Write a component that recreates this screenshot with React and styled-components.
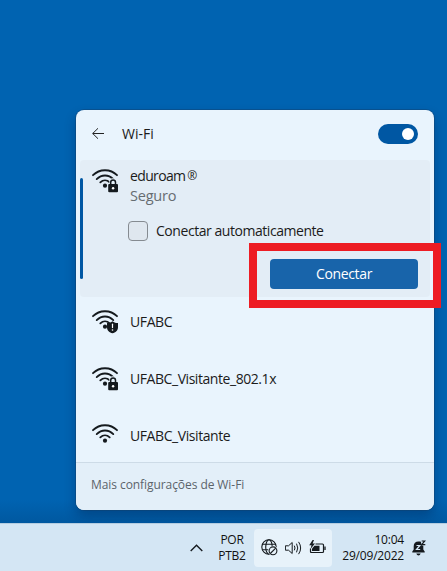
import React from "react";
import styled, { createGlobalStyle } from "styled-components";

const Global = createGlobalStyle`
  * { box-sizing: border-box; }
  body { margin: 0; overflow: hidden; }
  button { font: inherit; border: 0; padding: 0; background: none; color: inherit; }
  svg { display: block; flex: none; }
`;

const Desktop = styled.div`
  width: 447px;
  height: 571px;
  display: flex;
  flex-direction: column;
  background: linear-gradient(#0063b1 0 500px, #0058a0 523px);
  font-family: "Open Sans", "Noto Sans", sans-serif;
  color: #1b1b1b;
`;

const Stage = styled.main`
  flex: 1;
  padding: 110px 13px 0 76px;
`;

const Panel = styled.section`
  height: 400px;
  display: flex;
  flex-direction: column;
  border-radius: 8px;
  background: #e9f4fd;
  box-shadow: 0 0 0 1px rgba(20, 60, 100, 0.4), 0 6px 12px rgba(0, 20, 60, 0.3);
`;

const Text = styled.span`
  font-size: ${(p) => p.$size || 14}px;
  letter-spacing: ${(p) => p.$track || 0}px;
  line-height: 20px;
  white-space: nowrap;
  color: ${(p) => p.$color || "inherit"};
`;

const Header = styled.header`
  flex: none;
  height: 50px;
  display: flex;
  align-items: center;
  gap: 18px;
  padding: 0 16px 2px;
`;

const Toggle = styled.button`
  width: 40px;
  height: 20px;
  margin-left: auto;
  display: flex;
  align-items: center;
  justify-content: flex-end;
  padding-right: 4px;
  border-radius: 10px;
  background: #0057a3;
`;

const Knob = styled.span`
  width: 12px;
  height: 12px;
  border-radius: 50%;
  background: #fff;
`;

const Selected = styled.div`
  position: relative;
  flex: none;
  height: 137px;
  margin: 0 4px;
  padding: 6px 12px 0;
  border-radius: 4px;
  background: #e3edf6;
`;

const Accent = styled.span`
  position: absolute;
  left: 0;
  top: 18px;
  width: 3px;
  height: 101px;
  border-radius: 2px;
  background: #0057a3;
`;

const Network = styled.div`
  display: flex;
  gap: 12px;
`;

const IconSlot = styled.div`
  padding-top: 3px;
`;

const NetworkText = styled.div`
  display: flex;
  flex-direction: column;
`;

const NetworkName = styled.div`
  display: flex;
  gap: 2px;
`;

const AutoConnect = styled.label`
  display: flex;
  align-items: center;
  gap: 8px;
  margin: 15px 0 0 36px;
`;

const Checkbox = styled.span`
  width: 20px;
  height: 20px;
  border: 1px solid #858b91;
  border-radius: 4px;
  background: #dfe7ef;
`;

const Connect = styled.button`
  width: 148px;
  height: 30px;
  display: flex;
  align-items: center;
  justify-content: center;
  margin: 18px 0 0 auto;
  border-radius: 4px;
  background: #1864aa;
  color: #fff;
`;

const Highlight = styled.div`
  position: absolute;
  left: 169px;
  top: 83px;
  width: 192px;
  height: 65px;
  border: 8px solid #ed1c24;
`;

const Row = styled.div`
  flex: none;
  height: 57px;
  display: flex;
  align-items: center;
  gap: 12px;
  padding: 0 16px 7px;

  &:last-of-type {
    height: 51px;
    padding-bottom: 1px;
  }
`;

const Footer = styled.footer`
  flex: 1;
  display: flex;
  align-items: center;
  padding: 0 15px 3px;
  border-top: 1px solid #cddbe7;
  border-radius: 0 0 8px 8px;
  background: #e3eff9;
`;

const Taskbar = styled.footer`
  height: 48px;
  display: flex;
  align-items: center;
  border-top: 1px solid #b5cde0;
  background: #d4e6f4;
  color: #111;
`;

const Chevron = styled.div`
  margin-left: 190px;
`;

const Stack = styled.div`
  display: flex;
  flex-direction: column;
  align-items: ${(p) => p.$align};
  width: ${(p) => p.$width}px;
  margin-left: ${(p) => p.$gap}px;
`;

const TrayLine = styled(Text)`
  line-height: 16px;
`;

const Tray = styled.div`
  width: 78px;
  height: 38px;
  margin-left: 8px;
  display: flex;
  align-items: center;
  padding-left: 7px;
  gap: 7px;
  border-radius: 4px;
  background: #e7f2fa;
`;

const Bell = styled.div`
  margin-left: 8px;
`;

const ink = "#151a1e";

function WifiIcon({ badge }) {
  return (
    <svg width="26" height="24" viewBox="0 0 26 24" fill="none" stroke={ink} strokeWidth="1.8" strokeLinecap="round">
      <path d="M1 6.200C7.500-.4 18.500-.4 25 6.200" />
      <path d="M4.700 10.100C9.500 5.300 16.500 5.300 21.300 10.100" />
      <path d="M8.300 13.400C11.100 10.600 14.900 10.600 17.700 13.400" />
      <circle cx="13" cy="16.700" r="2.100" fill={ink} stroke="none" />
      {badge === "lock" && (
        <>
          <path d="M15.300 24V14.800H17.300V13A3.700 3.700 0 0 1 24.700 13V14.800H26V24Z" fill="#e6f1fa" stroke="none" />
          <rect x="16.200" y="15" width="9.800" height="8.300" rx="1" fill={ink} stroke="none" />
          <path d="M18.700 15.500V13.300a2.400 2.400 0 0 1 4.800 0v2.200" strokeWidth="1.500" />
          <circle cx="21.100" cy="19.200" r="1.200" fill="#fff" stroke="none" />
        </>
      )}
      {badge === "shield" && (
        <>
          <path d="M20.500 11.200C19 12.600 17 13 15 13V17.200C15 20.500 17.500 22.500 20.500 23.300C23.500 22.500 26 20.500 26 17.200V13C24 13 22 12.600 20.500 11.200Z" fill={ink} stroke="none" />
          <path d="M20.500 14.200V17.600" stroke="#fff" strokeWidth="1.200" />
          <circle cx="20.500" cy="20" r=".8" fill="#fff" stroke="none" />
        </>
      )}
    </svg>
  );
}

function GlobeIcon() {
  return (
    <svg width="17" height="17" viewBox="0 0 17 17" fill="none" stroke={ink} strokeWidth="1.100">
      <circle cx="8" cy="8" r="7.200" />
      <ellipse cx="8" cy="8" rx="3.300" ry="7.200" />
      <path d="M1.300 5.300H14.700M1.300 10.700H9" />
      <circle cx="12" cy="11.800" r="5" fill="#e7f2fa" stroke="none" />
      <circle cx="12" cy="11.800" r="3.900" />
      <path d="M9.300 14.500L14.700 9.100" />
    </svg>
  );
}

function SpeakerIcon() {
  return (
    <svg width="17" height="14" viewBox="0 0 17 14" fill="none" stroke={ink} strokeWidth="1" strokeLinejoin="round" strokeLinecap="round">
      <path d="M.8 4.800H3.500L7.200 1.500V12.500L3.500 9.200H.8Z" />
      <path d="M9.500 5Q10.700 7 9.500 9M11.700 3Q14 7 11.700 11M13.800 1.200Q17.700 7 13.800 12.800" />
    </svg>
  );
}

function BatteryIcon() {
  return (
    <svg width="17" height="15" viewBox="0 0 17 15" fill="none" stroke={ink}>
      <path d="M6.500 4H13.500Q14.500 4 14.500 5V11.500Q14.500 12.500 13.500 12.500H2.500Q1.500 12.500 1.500 11.500V8.500" strokeWidth="1.200" />
      <path d="M5.500 5.800H10.500V11H3V8.500Z" fill={ink} stroke="none" />
      <path d="M16 6.500V10" strokeWidth="1.300" />
      <path d="M3.600 0L.2 5.300H2.500L1.500 9L6 3.600H3.600L5 0Z" fill={ink} stroke="none" />
    </svg>
  );
}

function BellIcon() {
  return (
    <svg width="14" height="16" viewBox="0 0 14 16" fill="none" stroke={ink}>
      <path d="M6.500 1.500C3.500 1.500 1.700 3.300 1.700 6.200V9.500L.3 11.500V12.500H12.700V11.500L11.300 9.500V5.500L8.500 1.500Z" fill={ink} stroke="none" />
      <path d="M4.300 13.500H8.700Q8 15.500 6.500 15.500T4.300 13.500Z" fill={ink} stroke="none" />
      <path d="M4.500 5.500H7.900L4.500 9.500H8.200" stroke="#d4e6f4" strokeWidth="1.200" />
      <path d="M8.700 0H14V5.500H9.700Z" fill="#d4e6f4" stroke="none" />
      <path d="M9.700 1H12.700L9.700 4.600H13.300" strokeWidth="1.200" />
    </svg>
  );
}

const others = [
  { name: "UFABC", badge: "shield", track: -0.4 },
  { name: "UFABC_Visitante_802.1x", badge: "lock", track: -0.44 },
  { name: "UFABC_Visitante", badge: null, track: -0.42 },
];

export default function App() {
  return (
    <Desktop>
      <Global />
      <Stage>
        <Panel>
          <Header>
            <svg width="12" height="12" viewBox="0 0 12 12" fill="none" stroke="#222" strokeWidth="1">
              <path d="M12 5.500H.7M6 .3L.7 5.500L6 10.700" />
            </svg>
            <Text>Wi-Fi</Text>
            <Toggle aria-label="Wi-Fi"><Knob /></Toggle>
          </Header>
          <Selected>
            <Accent />
            <Network>
              <IconSlot><WifiIcon badge="lock" /></IconSlot>
              <NetworkText>
                <NetworkName>
                  <Text $track={-0.65}>eduroam</Text>
                  <Text $size={12}>®</Text>
                </NetworkName>
                <Text $size={14.5} $track={-0.2} $color="#666c71">Seguro</Text>
              </NetworkText>
            </Network>
            <AutoConnect>
              <Checkbox />
              <Text $track={-0.45}>Conectar automaticamente</Text>
            </AutoConnect>
            <Connect><Text $track={-0.35}>Conectar</Text></Connect>
            <Highlight />
          </Selected>
          {others.map((n) => (
            <Row key={n.name}>
              <WifiIcon badge={n.badge} />
              <Text $track={n.track}>{n.name}</Text>
            </Row>
          ))}
          <Footer>
            <Text $size={12} $track={-0.07} $color="#5c646b">Mais configurações de Wi-Fi</Text>
          </Footer>
        </Panel>
      </Stage>
      <Taskbar>
        <Chevron>
          <svg width="13" height="8" viewBox="0 0 13 8" fill="none" stroke={ink} strokeWidth="1.400">
            <path d="M.7 7L6.500 1.200L12.300 7" />
          </svg>
        </Chevron>
        <Stack $align="center" $width={28} $gap={15}>
          <TrayLine $size={12} $track={-0.25}>POR</TrayLine>
          <TrayLine $size={12} $track={-0.25}>PTB2</TrayLine>
        </Stack>
        <Tray>
          <GlobeIcon />
          <SpeakerIcon />
          <BatteryIcon />
        </Tray>
        <Stack $align="flex-end" $width={64} $gap={8}>
          <TrayLine $size={12} $track={-0.2}>10:04</TrayLine>
          <TrayLine $size={12} $track={-0.2}>29/09/2022</TrayLine>
        </Stack>
        <Bell><BellIcon /></Bell>
      </Taskbar>
    </Desktop>
  );
}
